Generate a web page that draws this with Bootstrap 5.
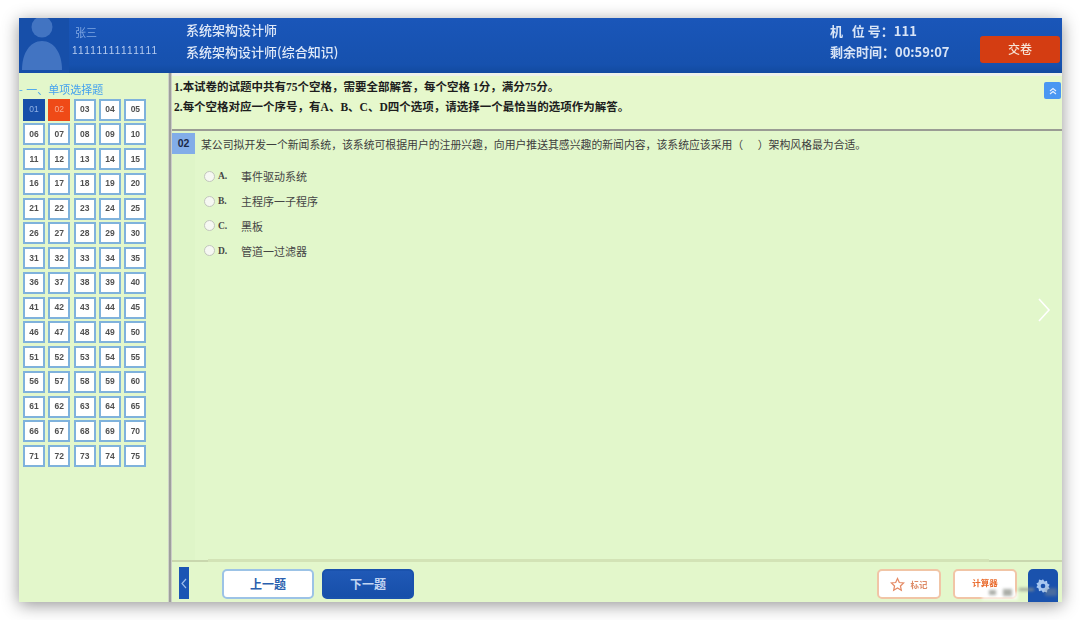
<!DOCTYPE html>
<html lang="zh">
<head>
<meta charset="utf-8">
<title>系统架构设计师</title>
<link rel="stylesheet" href="https://cdn.jsdelivr.net/npm/bootstrap@5.3.0/dist/css/bootstrap.min.css">
<style>
html,body{height:620px;overflow:hidden;background:#fff}
body{font-family:"Noto Sans CJK SC","Liberation Sans",sans-serif;padding:18px 18px 18px 19px}
.exam-win{width:1043px;height:584px;background:#e3f7cb;box-shadow:0 3px 16px rgba(0,0,0,.42);position:relative;overflow:hidden;filter:blur(.6px)}
.exam-head{height:55px;background:linear-gradient(#1a56b9,#1651ae 85%,#124a9f);color:#e4edf9;flex:none}
.avatar-box{width:50px;height:55px;background:#174fa9;flex:none}
.user-box{width:117px;padding:6px 0 0 3px;flex:none}
.user-name{font-size:11px;line-height:16px;color:#7fa6e2;padding-left:3px}
.user-id{font-size:10px;letter-spacing:1.3px;line-height:18px;color:#b7cdf0;margin-top:2px;font-family:"Liberation Sans",sans-serif}
.title-box{width:644px;padding-top:1px;font-size:13px;line-height:22px;font-weight:500;color:#dfe9f8}
.info-box{width:150px;padding-top:2px;font-size:13px;line-height:21px;font-weight:700;color:#d8e4f6;white-space:pre}
.hand-in{width:80px;height:27px;margin-top:18px;background:#d43d12;border-radius:3px;color:#f6e4d6;font-size:12px;font-weight:500;line-height:25px;text-align:center}
.exam-body{height:529px}
.side-pane{width:149px;flex:none;background:#e3f7cb}
.sec-title{font-size:11px;line-height:14px;color:#45a2ef;padding-top:9px;white-space:nowrap;word-spacing:1px}
.num-grid{display:grid;grid-template-columns:repeat(5,22px);grid-auto-rows:22px;column-gap:3.35px;row-gap:2.75px;margin:2.5px 0 0 4px}
.num-cell{background:#fff;border:2px solid #7fb2dc;font-size:8.5px;color:#505050;display:flex;align-items:center;justify-content:center;font-family:"Liberation Sans",sans-serif;font-weight:700}
.num-cell.is-cur{background:#174fa9;border-color:#174fa9;color:#8fb0e4;font-weight:400}
.num-cell.is-mark{background:#ef4a17;border-color:#ef4a17;color:#f8ab90;font-weight:400}
.split-bar{width:4px;flex:none;background:linear-gradient(90deg,#e8efe0,#8f8f8f 45%,#a9a9a9 75%,#eef3e6)}
.main-pane{min-width:0;position:relative}
.top-gap{height:3px;background:#edf2ea;flex:none}
.notes{height:53px;background:#e6f8cc;padding:2px 0 0 2px;font-size:11.5px;line-height:19.5px;font-weight:700;color:#1d1d1d;flex:none;position:relative;font-family:"Liberation Serif","Noto Sans CJK SC",serif}
.fold-btn{position:absolute;right:1px;top:6px;width:17px;height:17px;background:#4a97f2;border-radius:2px;display:flex;align-items:center;justify-content:center}
.ques-box{border-top:2px solid #9a9c94;height:431px;flex:none;display:flex;position:relative;background:#e2f7cb}
.ques-rail{width:23px;flex:none;background:#dff5c8}
.ques-no{height:21px;background:#82ade8;color:#1a2a48;font-size:10.5px;font-weight:700;line-height:21px;text-align:center;font-family:"Liberation Sans",sans-serif;margin-top:2px}
.ques-main{padding:5px 0 0 6px}
.ques-text{font-size:10.85px;line-height:16px;color:#3d3d3d;white-space:nowrap}
.opt-list{margin:12px 0 0 3px}
.opt-row{height:24.8px;display:flex;align-items:center;font-size:11px;color:#454545}
.opt-dot{width:11px;height:11px;border-radius:50%;background:#f6f8f2;border:1px solid #c2c6bd;margin-right:3px;flex:none}
.opt-key{width:23px;font-size:9.5px;font-weight:700;font-family:"Liberation Serif",serif}
.next-arrow{position:absolute;right:11px;top:166px}
.foot-bar{height:40px;border-top:2px solid #c9d7ae;padding:7px 0 0 7px;background:#e3f7cb;position:relative}
.foot-shade{position:absolute;left:36px;right:73px;top:-3px;height:3px;background:#d3e3b6}
.back-tab{width:10px;height:32px;background:#1b55b4;flex:none;margin:-2px 33px 0 0;display:flex;align-items:center;justify-content:center}
.nav-prev,.nav-next{width:92px;height:30px;border-radius:5px;font-size:12px;font-weight:700;line-height:26px;text-align:center;flex:none}
.nav-prev{background:#fff;border:2px solid #9cc3e6;color:#2a5fae;margin-right:8px}
.nav-next{background:linear-gradient(#2059b6,#174fa9);border:2px solid #1a52ad;color:#c3d6f2}
.tool-mark,.tool-calc{width:64px;height:30px;background:#fff;border:2px solid #f1c5a6;border-radius:5px;font-size:8.5px;font-weight:700;display:flex;align-items:center;justify-content:center;gap:5px;flex:none}
.tool-mark{color:#dd8a66;margin-left:auto;margin-right:12px}
.tool-calc{color:#ea6c2e;margin-right:11px;padding-bottom:4px}
.tool-gear{width:30px;height:33px;background:#1a52ad;border-radius:5px 5px 0 0;flex:none;display:flex;align-items:center;justify-content:center;margin-right:4px}
.smudge{position:absolute;background:#8f938c;filter:blur(1.5px);opacity:.75}
.smudge-a{right:66px;top:28px;width:7px;height:5px}
.smudge-b{right:50px;top:27px;width:9px;height:7px}
.smudge-c{right:28px;top:26px;width:15px;height:3px}
.smudge-d{right:5px;top:26px;width:12px;height:8px;opacity:.4}
.smudge-e{right:44px;top:30px;width:36px;height:8px;background:#fff;opacity:.7}
</style>
</head>
<body>
<div class="exam-win d-flex flex-column">
  <div class="exam-head d-flex">
    <div class="avatar-box">
      <svg width="50" height="55" viewBox="0 0 50 55"><circle cx="23" cy="9" r="10.5" fill="#4274c2"/><path d="M3 52C3 35 11 23 23 23S43 35 43 52Z" fill="#4274c2"/></svg>
    </div>
    <div class="user-box">
      <div class="user-name">张三</div>
      <div class="user-id">11111111111111</div>
    </div>
    <div class="title-box">
      <div>系统架构设计师</div>
      <div>系统架构设计师(综合知识)</div>
    </div>
    <div class="info-box"><div>机   位 号&#xFF1A;111</div><div>剩余时间&#xFF1A;00:59:07</div></div>
    <div class="hand-in">交卷</div>
  </div>
  <div class="exam-body d-flex">
    <div class="side-pane">
      <div class="sec-title">- 一、单项选择题</div>
      <div class="num-grid">
        <div class="num-cell is-cur">01</div><div class="num-cell is-mark">02</div><div class="num-cell">03</div><div class="num-cell">04</div><div class="num-cell">05</div>
        <div class="num-cell">06</div><div class="num-cell">07</div><div class="num-cell">08</div><div class="num-cell">09</div><div class="num-cell">10</div>
        <div class="num-cell">11</div><div class="num-cell">12</div><div class="num-cell">13</div><div class="num-cell">14</div><div class="num-cell">15</div>
        <div class="num-cell">16</div><div class="num-cell">17</div><div class="num-cell">18</div><div class="num-cell">19</div><div class="num-cell">20</div>
        <div class="num-cell">21</div><div class="num-cell">22</div><div class="num-cell">23</div><div class="num-cell">24</div><div class="num-cell">25</div>
        <div class="num-cell">26</div><div class="num-cell">27</div><div class="num-cell">28</div><div class="num-cell">29</div><div class="num-cell">30</div>
        <div class="num-cell">31</div><div class="num-cell">32</div><div class="num-cell">33</div><div class="num-cell">34</div><div class="num-cell">35</div>
        <div class="num-cell">36</div><div class="num-cell">37</div><div class="num-cell">38</div><div class="num-cell">39</div><div class="num-cell">40</div>
        <div class="num-cell">41</div><div class="num-cell">42</div><div class="num-cell">43</div><div class="num-cell">44</div><div class="num-cell">45</div>
        <div class="num-cell">46</div><div class="num-cell">47</div><div class="num-cell">48</div><div class="num-cell">49</div><div class="num-cell">50</div>
        <div class="num-cell">51</div><div class="num-cell">52</div><div class="num-cell">53</div><div class="num-cell">54</div><div class="num-cell">55</div>
        <div class="num-cell">56</div><div class="num-cell">57</div><div class="num-cell">58</div><div class="num-cell">59</div><div class="num-cell">60</div>
        <div class="num-cell">61</div><div class="num-cell">62</div><div class="num-cell">63</div><div class="num-cell">64</div><div class="num-cell">65</div>
        <div class="num-cell">66</div><div class="num-cell">67</div><div class="num-cell">68</div><div class="num-cell">69</div><div class="num-cell">70</div>
        <div class="num-cell">71</div><div class="num-cell">72</div><div class="num-cell">73</div><div class="num-cell">74</div><div class="num-cell">75</div>
      </div>
    </div>
    <div class="split-bar"></div>
    <div class="main-pane flex-grow-1 d-flex flex-column">
      <div class="top-gap"></div>
      <div class="notes">
        <div>1.本试卷的试题中共有75个空格&#xFF0C;需要全部解答&#xFF0C;每个空格 1分&#xFF0C;满分75分。</div>
        <div>2.每个空格对应一个序号&#xFF0C;有A、B、C、D四个选项&#xFF0C;请选择一个最恰当的选项作为解答。</div>
        <div class="fold-btn"><svg width="8" height="8" viewBox="0 0 8 8"><path d="M1 4L4 1.500L7 4M1 7L4 4.500L7 7" fill="none" stroke="#e5f0ff" stroke-width="1.1"/></svg></div>
      </div>
      <div class="ques-box">
        <div class="ques-rail"><div class="ques-no">02</div></div>
        <div class="ques-main">
          <div class="ques-text">某公司拟开发一个新闻系统&#xFF0C;该系统可根据用户的注册兴趣&#xFF0C;向用户推送其感兴趣的新闻内容&#xFF0C;该系统应该采用&#xFF08; &nbsp; &nbsp; &nbsp;&#xFF09;架构风格最为合适。</div>
          <div class="opt-list">
            <div class="opt-row"><span class="opt-dot"></span><span class="opt-key">A.</span><span>事件驱动系统</span></div>
            <div class="opt-row"><span class="opt-dot"></span><span class="opt-key">B.</span><span>主程序一子程序</span></div>
            <div class="opt-row"><span class="opt-dot"></span><span class="opt-key">C.</span><span>黑板</span></div>
            <div class="opt-row"><span class="opt-dot"></span><span class="opt-key">D.</span><span>管道一过滤器</span></div>
          </div>
        </div>
        <svg class="next-arrow" width="14" height="26" viewBox="0 0 14 26"><path d="M2 2L12 13L2 24" fill="none" stroke="#fff" stroke-width="1.6"/></svg>
      </div>
      <div class="foot-bar d-flex align-items-start">
        <div class="foot-shade"></div>
        <div class="back-tab"><svg width="6" height="11" viewBox="0 0 6 11"><path d="M5 1L1 5.500L5 10" fill="none" stroke="#9dbdec" stroke-width="1.2"/></svg></div>
        <div class="nav-prev">上一题</div>
        <div class="nav-next">下一题</div>
        <div class="tool-mark">
          <svg width="15" height="15" viewBox="0 0 24 24"><path d="M12 2.5l2.9 6.3 6.9.8-5.1 4.7 1.4 6.8-6.1-3.4-6.1 3.4 1.4-6.8-5.1-4.7 6.9-.8Z" fill="none" stroke="#e58a64" stroke-width="2"/></svg>
          <span>标记</span>
        </div>
        <div class="tool-calc">计算器</div>
        <div class="tool-gear">
          <svg width="16" height="16" viewBox="0 0 24 24"><path d="M12 2l2.2 3.2 3.8-.9.6 3.9 3.4 1.9-1.9 2.9 1.9 2.9-3.4 1.9-.6 3.9-3.8-.9L12 22l-2.2-3.2-3.8.9-.6-3.9-3.4-1.9 1.9-2.9-1.9-2.9 3.4-1.9.6-3.9 3.8.9Z" fill="#a9c8f0"/><circle cx="12" cy="12" r="3.5" fill="#1a52ad"/></svg>
        </div>
        <div class="smudge smudge-e"></div>
        <div class="smudge smudge-a"></div>
        <div class="smudge smudge-b"></div>
        <div class="smudge smudge-c"></div>
        <div class="smudge smudge-d"></div>
      </div>
    </div>
  </div>
</div>
</body>
</html>
